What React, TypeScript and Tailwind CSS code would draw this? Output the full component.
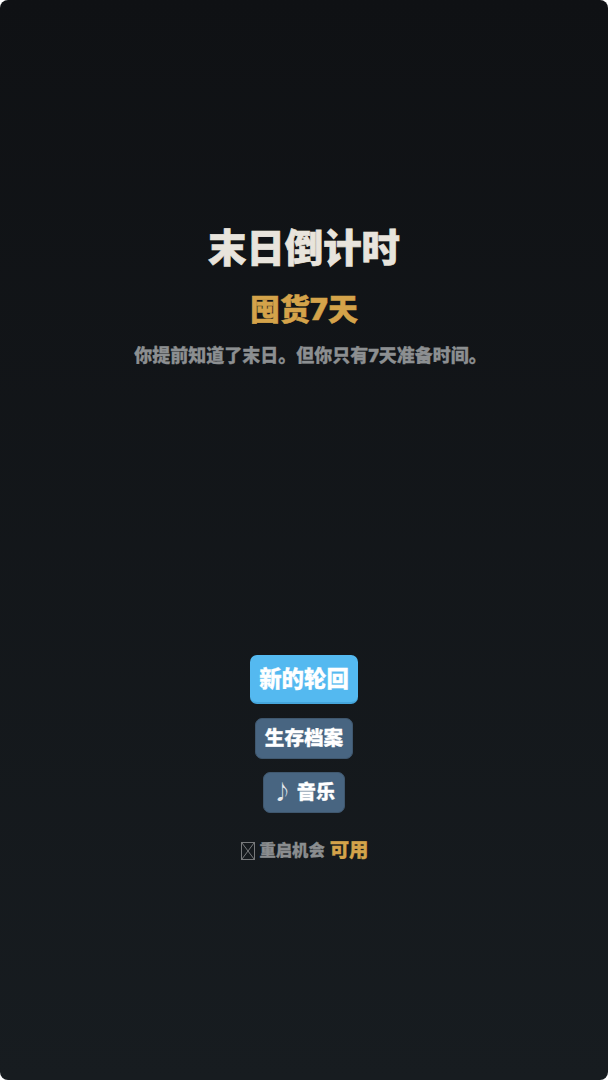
const font = { fontFamily: 'Inter, "Noto Sans CJK SC Black", "Noto Sans CJK SC", sans-serif' };

function MissingGlyph() {
  return (
    <svg width="14" height="18" viewBox="0 0 14 18" fill="none" stroke="#77797b" strokeWidth="1">
      <rect x="0.5" y="0.5" width="13" height="17" />
      <path d="M1 1l12 16M13 1L1 17" />
    </svg>
  );
}

export default function App() {
  return (
    <div className="bg-white">
      <main
        style={font}
        className="transform-gpu h-[1080px] w-[608px] rounded-lg bg-gradient-to-b from-[#0f1114] to-[#171c20] flex flex-col items-center pt-[222px] font-black"
      >
        <h1 className="text-[38.4px] leading-[52px] text-[#e8e4dc] [-webkit-text-stroke:0.7px_#e8e4dc]">末日倒计时</h1>
        <h2 className="mt-[15px] text-[30px] leading-[40px] text-[#d4a34a] [-webkit-text-stroke:0.5px_#d4a34a]">囤货7天</h2>
        <p className="mt-[15px] pl-[13px] text-[18px] leading-[24px] text-[#8c8f91] [-webkit-text-stroke:0.3px_#8c8f91]">你提前知道了末日。但你只有7天准备时间。</p>

        <button className="mt-[287px] h-[49px] w-[108px] rounded-[7px] bg-[#54b9f0] border-b-2 border-[#45a6dc] text-[22.4px] text-white [-webkit-text-stroke:0.3px_#ffffff]">
          新的轮回
        </button>
        <button className="mt-[14px] h-[41px] w-[98px] rounded-[7px] bg-[#486581] border border-[#3f576e] text-[19.6px] text-white [-webkit-text-stroke:0.3px_#ffffff]">
          生存档案
        </button>
        <button className="mt-[13px] h-[41px] w-[82px] rounded-[7px] bg-[#486581] border border-[#3f576e] text-[19.2px] text-white">
          <span className="mr-px font-normal text-[#e4e8ec]">♪</span>{" "}
          <span className="[-webkit-text-stroke:0.3px_#ffffff]">音乐</span>
        </button>

        <div className="mt-[23px] flex items-center gap-[5px] text-[16.3px] text-[#8a8d8f] [-webkit-text-stroke:0.3px_#8a8d8f]">
          <span className="ml-px"><MissingGlyph /></span>
          <span>重启机会</span>
          <span className="text-[19.4px] text-[#d4a34a] [-webkit-text-stroke:0.3px_#d4a34a]">可用</span>
        </div>
      </main>
    </div>
  );
}
